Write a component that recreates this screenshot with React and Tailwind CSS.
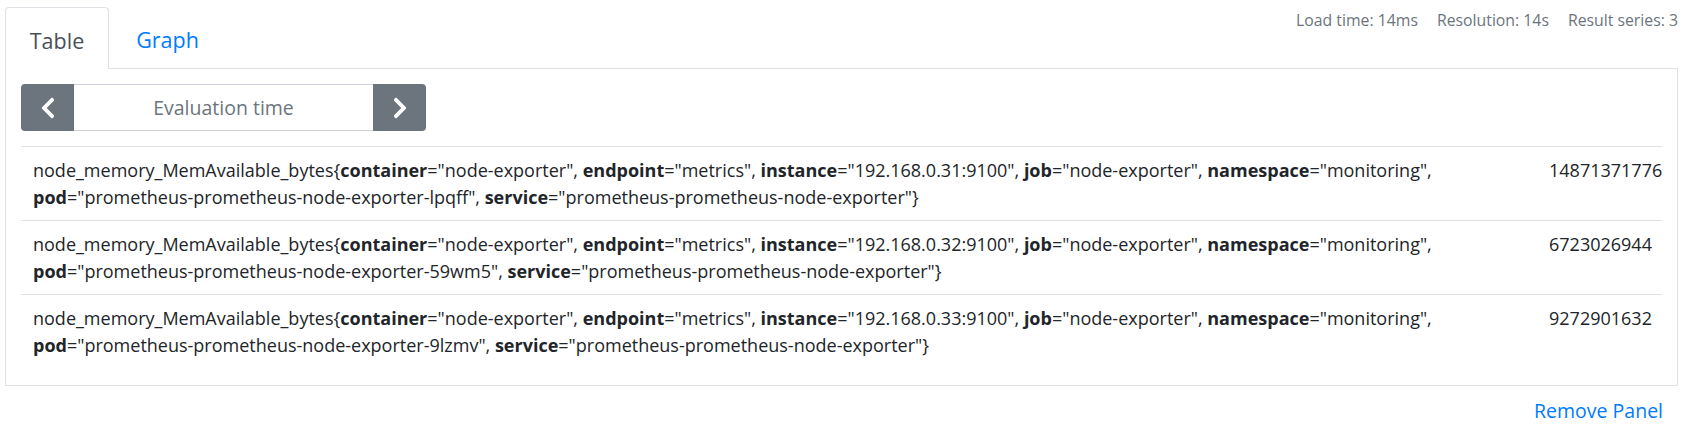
import React, { useState } from 'react';
import { FaChevronLeft, FaChevronRight } from 'react-icons/fa';

const series = [
    { instance: '192.168.0.31:9100', pod: 'prometheus-prometheus-node-exporter-lpqff', value: '14871371776' },
    { instance: '192.168.0.32:9100', pod: 'prometheus-prometheus-node-exporter-59wm5', value: '6723026944' },
    { instance: '192.168.0.33:9100', pod: 'prometheus-prometheus-node-exporter-9lzmv', value: '9272901632' },
];

function Label({ name, value, last }) {
    return (
        <span>
            <span className="font-bold">{name}</span>="{value}"{last ? '' : ', '}
        </span>
    );
}

function SeriesRow({ item }) {
    return (
        <div className="flex border-t border-[#dee2e6]">
            <div className="flex-1 pl-[12px] pr-[12px] pt-[10px] pb-[9px]">
                node_memory_MemAvailable_bytes{'{'}
                <Label name="container" value="node-exporter" />
                <Label name="endpoint" value="metrics" />
                <Label name="instance" value={item.instance} />
                <Label name="job" value="node-exporter" />
                <Label name="namespace" value="monitoring" />
                <Label name="pod" value={item.pod} />
                <Label name="service" value="prometheus-prometheus-node-exporter" last />
                {'}'}
            </div>
            <div className="w-[125px] shrink-0 pl-[12px] pt-[10px] whitespace-nowrap">{item.value}</div>
        </div>
    );
}

export default function App() {
    const [tab, setTab] = useState('table');

    return (
        <div className="bg-white text-[#212529] pl-[5px] pr-[8px]" style={{ fontFamily: '"Open Sans", "Noto Sans", sans-serif' }}>
            <div className="flex items-end">
                <button
                    onClick={() => setTab('table')}
                    className="w-[104px] h-[62px] mt-[7px] pt-[5px] border-t border-l border-r border-[#dee2e6] rounded-t-[4px] text-[21.5px] text-[#495057] bg-white"
                >
                    Table
                </button>
                <button
                    onClick={() => setTab('graph')}
                    className="w-[117px] h-[62px] pt-[5px] border-b border-[#dee2e6] text-[21.5px] text-[#007bff]"
                >
                    Graph
                </button>
                <div className="flex-1 self-stretch border-b border-[#dee2e6] flex justify-end items-start pt-[8px] gap-[19px] text-[15.8px] leading-[24px] text-[#6c757d]">
                    <span>Load time: 14ms</span>
                    <span>Resolution: 14s</span>
                    <span>Result series: 3</span>
                </div>
            </div>

            <div className="border-l border-r border-b border-[#dee2e6] pt-[15px] px-[15px] pb-[17px] text-[18px] leading-[27px]">
                <div className="flex w-[405px] h-[47px]">
                    <button className="w-[53px] bg-[#6c757d] text-white rounded-l-[4px] flex items-center justify-center">
                        <FaChevronLeft size={24} />
                    </button>
                    <div className="flex-1 border-t border-b border-[#ced4da] flex items-center justify-center text-[19.5px] text-[#6c757d]">
                        Evaluation time
                    </div>
                    <button className="w-[53px] bg-[#6c757d] text-white rounded-r-[4px] flex items-center justify-center">
                        <FaChevronRight size={24} />
                    </button>
                </div>

                <div className="mt-[15px]">
                    {series.map(item => (
                        <SeriesRow key={item.instance} item={item} />
                    ))}
                </div>
            </div>

            <div className="flex justify-end pr-[15px] mt-[11px]">
                <button className="text-[19.5px] leading-[27px] text-[#007bff]">Remove Panel</button>
            </div>
        </div>
    );
}
